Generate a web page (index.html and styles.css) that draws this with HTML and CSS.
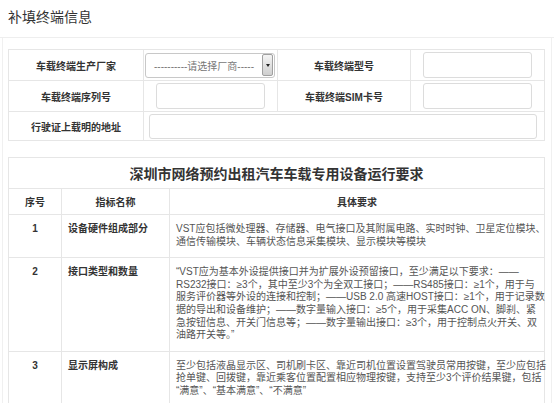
FILE: index.html
```html
<!DOCTYPE html>
<html lang="zh-CN">
<head>
<meta charset="utf-8">
<link rel="stylesheet" href="styles.css">
</head>
<body>
<div class="title">补填终端信息</div>
<div class="panel">
  <table class="form">
    <colgroup><col class="c1"><col class="c2"><col class="c3"><col class="c4"></colgroup>
    <tr class="r1">
      <td class="lbl">车载终端生产厂家</td>
      <td class="sel-cell">
        <div class="select">
          <span class="select-text">----------请选择厂商-----</span>
          <span class="select-btn"><span class="tri"></span></span>
        </div>
      </td>
      <td class="lbl">车载终端型号</td>
      <td class="in-cell"><div class="field"></div></td>
    </tr>
    <tr class="r2">
      <td class="lbl">车载终端序列号</td>
      <td class="in-cell"><div class="field"></div></td>
      <td class="lbl">车载终端SIM卡号</td>
      <td class="in-cell"><div class="field"></div></td>
    </tr>
    <tr class="r3">
      <td class="lbl">行驶证上载明的地址</td>
      <td class="wide-cell" colspan="3"><div class="field wide"></div></td>
    </tr>
  </table>

  <table class="req">
    <colgroup><col class="k1"><col class="k2"><col class="k3"></colgroup>
    <tr class="req-title"><td colspan="3">深圳市网络预约出租汽车车载专用设备运行要求</td></tr>
    <tr class="req-head"><td>序号</td><td>指标名称</td><td>具体要求</td></tr>
    <tr class="req-row">
      <td class="num">1</td>
      <td class="name">设备硬件组成部分</td>
      <td class="desc">VST应包括微处理器、存储器、电气接口及其附属电路、实时时钟、卫星定位模块、<br>通信传输模块、车辆状态信息采集模块、显示模块等模块</td>
    </tr>
    <tr class="req-row">
      <td class="num">2</td>
      <td class="name">接口类型和数量</td>
      <td class="desc">“VST应为基本外设提供接口并为扩展外设预留接口，至少满足以下要求：——<br>RS232接口：≥3个，其中至少3个为全双工接口；——RS485接口：≥1个，用于与<br>服务评价器等外设的连接和控制；——USB 2.0 高速HOST接口：≥1个，用于记录数<br>据的导出和设备维护；——数字量输入接口：≥5个，用于采集ACC ON、脚刹、紧<br>急按钮信息、开关门信息等；——数字量输出接口：≥3个，用于控制点火开关、双<br>油路开关等。”</td>
    </tr>
    <tr class="req-row">
      <td class="num">3</td>
      <td class="name">显示屏构成</td>
      <td class="desc">至少包括液晶显示区、司机刷卡区、靠近司机位置设置驾驶员常用按键，至少应包括<br>抢单键、回拨键，靠近乘客位置配置相应物理按键，支持至少3个评价结果键，包括<br>“满意”、“基本满意”、“不满意”</td>
    </tr>
  </table>
</div>
</body>
</html>
```
FILE: styles.css
```css
body {
  margin: 0;
  background: #fff;
  font-family: "Liberation Sans", "Noto Sans CJK SC", sans-serif;
  color: #555;
}
.title {
  height: 37px;
  line-height: 35px;
  padding-left: 8px;
  font-size: 14px;
  color: #333;
  border-bottom: 1px solid #eee;
}
.panel {
  margin: 0 2px;
  padding: 11px 6px 0 5px;
  border-left: 1px solid #f0f0f0;
  border-right: 1px solid #f0f0f0;
  height: 354px;
}
table {
  border-collapse: collapse;
  table-layout: fixed;
  width: 536px;
}
td {
  border: 1px solid #e6e6e6;
  padding: 0;
  font-size: 10px;
}
.form .c1 { width: 135px; }
.form .c2 { width: 134px; }
.form .c3 { width: 133px; }
.form .c4 { width: 134px; }
.form .r1 td { height: 30px; }
.form .r2 td { height: 30px; }
.form .r3 td { height: 28px; }
.lbl {
  text-align: center;
  font-weight: bold;
  color: #333;
}
.in-cell {
  text-align: center;
}
.field {
  display: inline-block;
  vertical-align: middle;
  width: 107px;
  height: 24px;
  border: 1px solid #dcdcdc;
  border-radius: 3px;
  background: #fff;
}
.wide-cell {
  padding-left: 5px;
}
.field.wide {
  display: block;
  width: 386px;
  height: 23px;
}
.sel-cell {
  padding-left: 1px;
}
.select {
  display: flex;
  align-items: center;
  width: 127px;
  height: 23px;
  border: 1px solid #c8c8c8;
  border-radius: 3px;
  background: #fff;
  padding-right: 1px;
}
.select-text {
  flex: 1;
  text-align: center;
  color: #777;
  font-size: 10px;
  white-space: nowrap;
  overflow: hidden;
}
.select-btn {
  display: flex;
  align-items: center;
  justify-content: center;
  width: 9px;
  height: 20px;
  border: 1px solid #a0a0a0;
  border-radius: 2px;
  background: linear-gradient(#f4f4f4, #cfcfcf);
}
.tri {
  width: 0;
  height: 0;
  border-left: 2.5px solid transparent;
  border-right: 2.5px solid transparent;
  border-top: 3px solid #222;
}

.req {
  margin-top: 16px;
}
.req .k1 { width: 53px; }
.req .k2 { width: 108px; }
.req .k3 { width: 375px; }
.req-title td {
  height: 30px;
  text-align: center;
  font-size: 14px;
  font-weight: bold;
  color: #333;
}
.req-head td {
  height: 25px;
  text-align: center;
  font-weight: bold;
  color: #333;
}
.req-row td {
  vertical-align: top;
  padding: 8px 6px 9px 6px;
  line-height: 12.6px;
}
.req-row .num {
  text-align: center;
  font-weight: bold;
  color: #333;
  padding-left: 0;
  padding-right: 0;
}
.req-row .name {
  font-weight: bold;
  color: #333;
}
.req-row .desc {
  color: #555;
  white-space: nowrap;
  padding-right: 0;
}
```
